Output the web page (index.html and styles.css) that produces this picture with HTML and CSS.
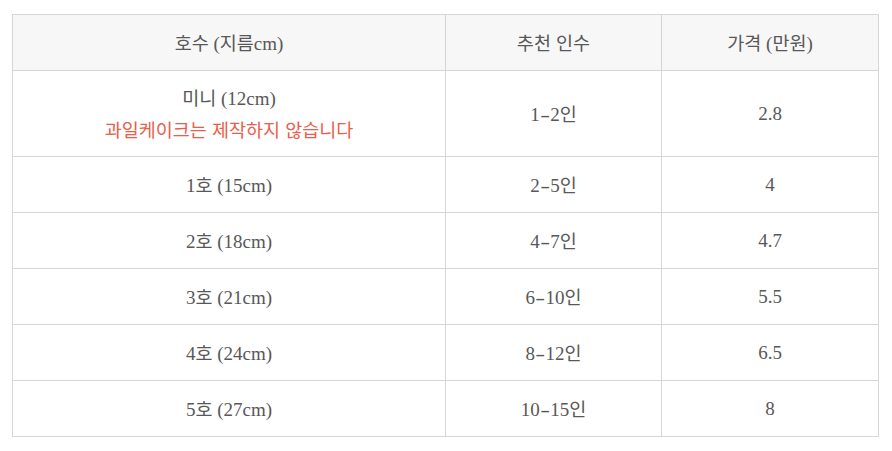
FILE: index.html
```html
<!DOCTYPE html>
<html lang="ko">
<head>
<meta charset="utf-8">
<link rel="stylesheet" href="styles.css">
</head>
<body>
<div class="wrap">
<table class="size-table">
  <colgroup>
    <col class="c1"><col class="c2"><col class="c3">
  </colgroup>
  <thead>
    <tr><th><span class="ko">호수</span> (<span class="ko">지름</span>cm)</th><th><span class="ko">추천 인수</span></th><th><span class="ko">가격</span> (<span class="ko">만원</span>)</th></tr>
  </thead>
  <tbody>
    <tr class="tall"><td><span class="ko">미니</span> (12cm)<br><span class="ko warn">과일케이크는 제작하지 않습니다</span></td><td>1<span class="dash">-</span>2<span class="ko">인</span></td><td>2.8</td></tr>
    <tr><td>1<span class="ko">호</span> (15cm)</td><td>2<span class="dash">-</span>5<span class="ko">인</span></td><td>4</td></tr>
    <tr><td>2<span class="ko">호</span> (18cm)</td><td>4<span class="dash">-</span>7<span class="ko">인</span></td><td>4.7</td></tr>
    <tr><td>3<span class="ko">호</span> (21cm)</td><td>6<span class="dash">-</span>10<span class="ko">인</span></td><td>5.5</td></tr>
    <tr><td>4<span class="ko">호</span> (24cm)</td><td>8<span class="dash">-</span>12<span class="ko">인</span></td><td>6.5</td></tr>
    <tr><td>5<span class="ko">호</span> (27cm)</td><td>10<span class="dash">-</span>15<span class="ko">인</span></td><td>8</td></tr>
  </tbody>
</table>
</div>
</body>
</html>
```
FILE: styles.css
```css
html, body {
  margin: 0;
  padding: 0;
  background: #ffffff;
}
.wrap {
  padding: 14px 12px 0 12px;
}
.size-table {
  width: 866px;
  border-collapse: collapse;
  table-layout: fixed;
  font-family: "Liberation Serif", "Noto Sans CJK KR", serif;
  font-size: 19px;
  color: #585858;
}
.c1 { width: 433px; }
.c2 { width: 216px; }
.c3 { width: 217px; }
.size-table th,
.size-table td {
  border: 1px solid #d6d6d6;
  text-align: center;
  vertical-align: middle;
  height: 55px;
  padding: 0;
  font-weight: normal;
  line-height: 30px;
}
.size-table th {
  background: #f7f7f7;
}
.size-table tr.tall td {
  height: 85px;
}
.ko {
  font-family: "Noto Sans CJK KR", sans-serif;
  font-size: 18.5px;
  font-weight: 400;
}
.dash {
  display: inline-block;
  transform: scaleX(1.55);
  margin: 0 2px;
}
.warn {
  color: #e8604c;
}
```
